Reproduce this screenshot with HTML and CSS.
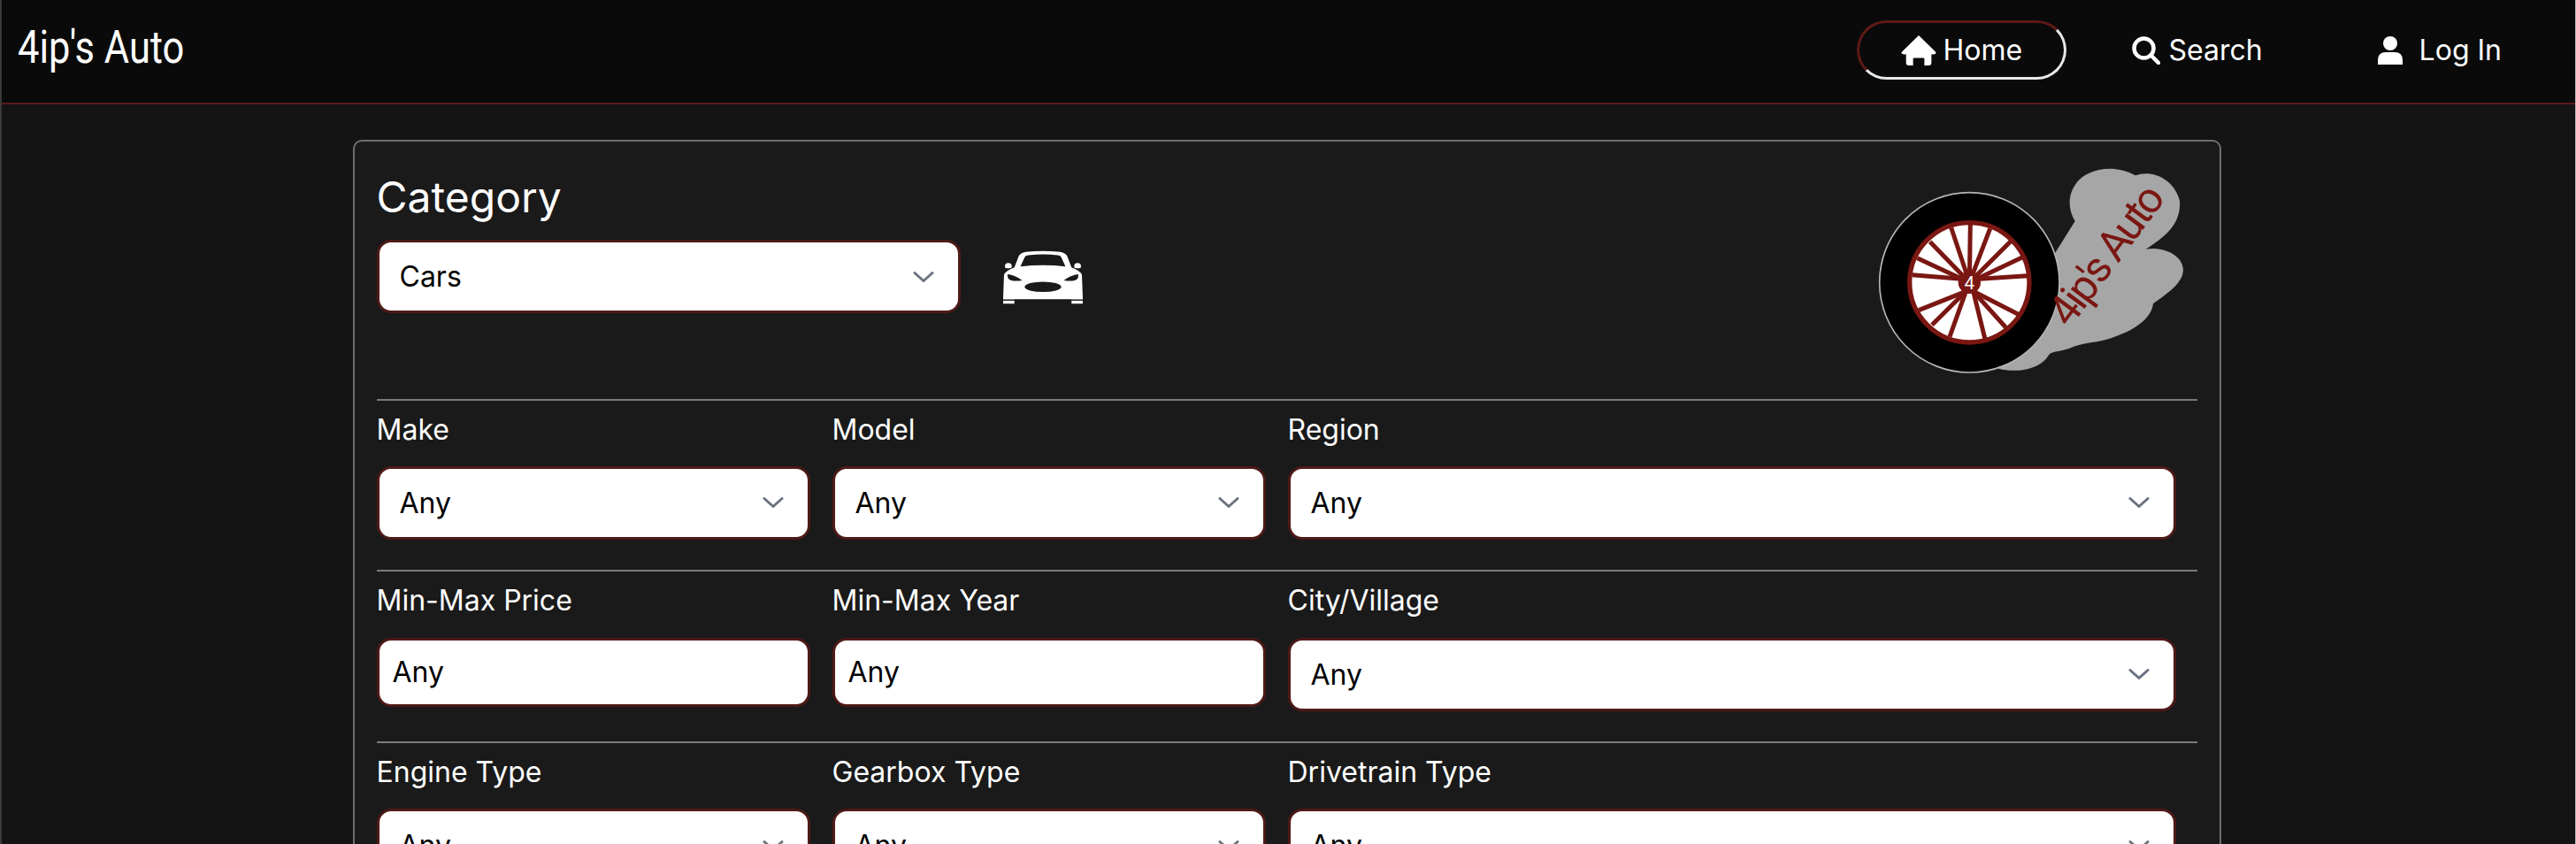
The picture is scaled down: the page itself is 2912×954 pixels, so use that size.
FILE: index.html
```html
<!DOCTYPE html>
<html lang="en">
<head>
<meta charset="utf-8">
<title>4ip's Auto</title>
<link rel="stylesheet" href="styles.css">
</head>
<body>
<nav class="navbar">
  <a class="brand" href="#"><span class="brand-text">4ip's Auto</span></a>
  <ul class="nav-links">
    <li><a class="nav-link nav-home active" href="#">
      <svg class="nav-icon icon-home" viewBox="0 0 37 32"><path d="M18.5 0 L37 18 Q36.5 21 32 20 L32 29 Q32 32 29 32 L24.5 32 L24.5 25 Q24.5 24 23.5 24 L13.5 24 Q12.5 24 12.5 25 L12.5 32 L8 32 Q5 32 5 29 L5 20 Q0.5 21 0 18 Z" fill="#fff"/></svg>
      <span>Home</span></a></li>
    <li><a class="nav-link nav-search" href="#">
      <svg class="nav-icon icon-search" viewBox="0 0 32 32"><circle cx="13.5" cy="13.5" r="11" fill="none" stroke="#fff" stroke-width="4.5"/><path d="M21.5 21.5 L30 30" stroke="#fff" stroke-width="4.5" stroke-linecap="round"/></svg>
      <span>Search</span></a></li>
    <li><a class="nav-link nav-login" href="#">
      <svg class="nav-icon icon-user" viewBox="0 0 28 32"><circle cx="14" cy="8" r="8" fill="#fff"/><path d="M0 32 L0 27 Q0 18 9 18 L19 18 Q28 18 28 27 L28 32 Z" fill="#fff"/></svg>
      <span>Log In</span></a></li>
  </ul>
</nav>
<main class="page">
  <section class="card">
    <header class="card-head">
      <div class="category">
        <h2 class="category-title">Category</h2>
        <div class="category-row">
          <select class="field field-category"><option>Cars</option></select>
          <svg class="car-icon" viewBox="0 0 92 62">
            <path d="M2 19 Q2 15 6 15 Q10 15 10 19 Q10 21 7 21 L4 21 Q2 21 2 19 Z M82 19 Q82 15 86 15 Q90 15 90 19 Q90 21 88 21 L85 21 Q82 21 82 19 Z" fill="#fff"/>
            <path d="M1 29 Q2 24 13 20 L18 7 Q20 3 26 2 Q46 0 66 2 Q72 3 74 7 L79 20 Q90 24 91 29 L92 55 L92 62 L79 62 L79 57 L13 57 L13 62 L0 62 L0 55 Z" fill="#fff"/>
            <path d="M20 19 L25 8 Q26 6 29 6 Q46 4 63 6 Q66 6 67 8 L72 19 Q46 16 20 19 Z" fill="#1a1a1a"/>
            <path d="M5 28 Q14 29 22 35 Q10 37 6 33 Q5 31 5 28 Z M87 28 Q78 29 70 35 Q82 37 86 33 Q87 31 87 28 Z" fill="#1a1a1a"/>
            <ellipse cx="46" cy="42.5" rx="21" ry="6" fill="#1a1a1a"/>
            <rect x="0" y="57" width="92" height="1.5" fill="#1a1a1a"/>
          </svg>
        </div>
      </div>
      <svg class="logo" viewBox="60 30 1065 750">
        <path d="M740 240 C715 200 715 150 745 110 C775 70 860 40 945 85 C1000 65 1075 95 1095 170 C1100 240 1060 285 980 335 C1040 325 1105 355 1107 405 C1105 450 1060 480 1005 520 C1000 570 940 610 880 630 C820 655 760 650 720 672 C680 685 660 680 650 695 C620 745 540 755 480 740 L640 400 Z" fill="#a6a6a6"/>
        <circle cx="382" cy="448" r="305" fill="#000" stroke="#b5b5b5" stroke-width="5"/>
        <circle cx="382" cy="448" r="203" fill="#fff" stroke="#7a1712" stroke-width="16"/>
        <g stroke="#7a1712" stroke-width="15">
          <path d="M382 448 L385 250"/><path d="M382 448 L320 262"/><path d="M382 448 L452 265"/>
          <path d="M382 448 L248 310"/><path d="M382 448 L522 308"/><path d="M382 448 L205 365"/>
          <path d="M382 448 L562 362"/><path d="M382 438 L188 422"/><path d="M382 438 L582 425"/>
          <path d="M370 478 L210 542"/><path d="M370 478 L255 592"/><path d="M370 478 L315 632"/>
          <path d="M395 478 L435 640"/><path d="M395 478 L505 600"/><path d="M395 478 L552 558"/>
        </g>
        <circle cx="382" cy="448" r="38" fill="#7a1712"/>
        <text class="logo-hub" x="382" y="470" text-anchor="middle">4</text>
        <text class="logo-text" x="0" y="0" transform="translate(722 605) rotate(-53.5)">4ip's Auto</text>
      </svg>
    </header>
    <div class="filters">
      <div class="filters-left">
        <div class="cell"><label class="cell-label">Make</label><select class="field"><option>Any</option></select></div>
        <div class="cell"><label class="cell-label">Model</label><select class="field"><option>Any</option></select></div>
        <div class="cell"><label class="cell-label">Min-Max Price</label><input class="field-input" type="text" value="Any"></div>
        <div class="cell"><label class="cell-label">Min-Max Year</label><input class="field-input" type="text" value="Any"></div>
        <div class="cell"><label class="cell-label">Engine Type</label><select class="field"><option>Any</option></select></div>
        <div class="cell"><label class="cell-label">Gearbox Type</label><select class="field"><option>Any</option></select></div>
      </div>
      <div class="filters-right">
        <div class="cell"><label class="cell-label">Region</label><select class="field"><option>Any</option></select></div>
        <div class="cell cell-wide"><label class="cell-label">City/Village</label><select class="field"><option>Any</option></select></div>
        <div class="cell cell-wide"><label class="cell-label">Drivetrain Type</label><select class="field"><option>Any</option></select></div>
      </div>
    </div>
  </section>
</main>
</body>
</html>
```

FILE: styles.css
```css
* { box-sizing: border-box; }
html, body { height: 100%; overflow: hidden; }
body {
  margin: 0;
  background: #141414;
  color: #fff;
  font-family: Inter, "Liberation Sans", sans-serif;
  font-size: 32px;
  border-left: 2px solid #3a3a3a;
  border-right: 1px solid #b8b8b8;
}
a { color: inherit; text-decoration: none; }

.navbar {
  height: 118px;
  background: #0a0a0a;
  border-bottom: 2px solid #5a1a1a;
  display: flex;
  align-items: flex-start;
  justify-content: space-between;
}
.brand { margin: 24px 0 0 18px; display: block; width: 186px; }
.brand-text {
  display: inline-block;
  font-family: Roboto, sans-serif;
  font-weight: 400;
  font-size: 52px;
  line-height: 60px;
  white-space: nowrap;
  transform: scaleX(0.835);
  transform-origin: left center;
}
.nav-links { list-style: none; margin: 23px 83px 0 0; padding: 0; display: flex; }
.nav-link { display: flex; align-items: center; height: 67px; }
.nav-icon { display: block; height: 32px; }
.nav-home {
  width: 237px;
  border-radius: 34px;
  padding-left: 47px;
  border: 3px solid transparent;
  border-top-color: #5f1a16;
  border-left-color: #5f1a16;
  border-bottom-color: #e8e8e8;
  border-right-color: #e8e8e8;
  gap: 7px;
}
.nav-home .icon-home { width: 40px; height: 34px; }
.nav-search { margin-left: 74px; gap: 9px; }
.icon-search { width: 32px; }
.nav-login { margin-left: 130px; gap: 19px; }
.icon-user { width: 28px; }

.page { padding-top: 40px; display: flex; justify-content: center; }
.card {
  width: 2112px;
  margin-right: 4px;
  background: #1a1a1a;
  border: 2px solid #6e6e6e;
  border-radius: 10px;
  padding: 0 25px;
}
.card-head {
  height: 290.6px;
  display: flex;
  justify-content: space-between;
  align-items: flex-start;
}
.category-title {
  margin: 34px 0 0;
  font-size: 48px;
  font-weight: 400;
  line-height: 58px;
}
.category-row { display: flex; align-items: center; margin-top: 19px; }
.category-row .field-category { width: 660px; }
.car-icon { width: 90px; height: 62px; margin-left: 48px; }
.logo { width: 355px; height: 250px; margin: 20px 10px 0 0; }
.logo-hub { font-family: Roboto, sans-serif; font-weight: 400; font-size: 62px; fill: #fff; }
.logo-text { font-family: Roboto, sans-serif; font-weight: 400; font-size: 146px; fill: #7a1712; letter-spacing: -9px; }

.field {
  display: block;
  width: 490px;
  height: 83px;
  padding: 0 60px 0 23px;
  background: #fff url("data:image/svg+xml,%3Csvg xmlns='http://www.w3.org/2000/svg' viewBox='0 0 24 12'%3E%3Cpath d='M2 1.5 L12 10.5 L22 1.5' fill='none' stroke='%236b7280' stroke-width='3' stroke-linecap='round' stroke-linejoin='round'/%3E%3C/svg%3E") no-repeat right 27px center / 24px 12px;
  border: 3px solid #4d1a18;
  border-radius: 16px;
  color: #000;
  font: 400 32px Inter, "Liberation Sans", sans-serif;
  appearance: none;
}
.field-input {
  display: block;
  width: 490px;
  height: 78px;
  padding: 0 15px;
  background: #fff;
  border: 3px solid #4d1a18;
  border-radius: 16px;
  color: #000;
  font: 400 32px Inter, "Liberation Sans", sans-serif;
}
.filters { display: flex; }
.filters-left { width: 1030px; display: grid; grid-template-columns: 515px 515px; }
.filters-right { width: 1030px; display: flex; flex-direction: column; }
.cell {
  height: 193.2px;
  border-top: 2px solid #7a7a7a;
  padding-top: 14px;
}
.filters-right .cell { height: 193.6px; }
.filters-right .field { width: 1004px; }
.cell-label { display: block; height: 60.4px; line-height: 38px; }
```
